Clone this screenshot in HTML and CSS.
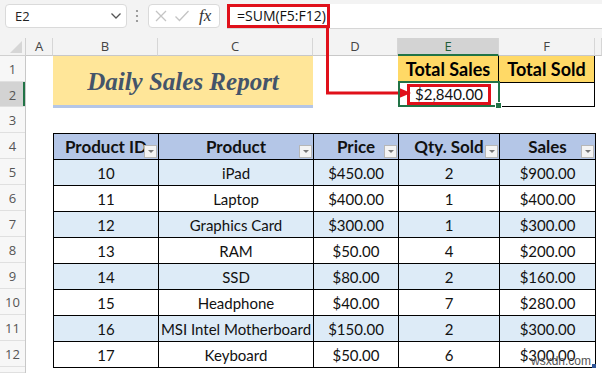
FILE: index.html
```html
<!DOCTYPE html>
<html lang="en">
<head>
    <meta charset="UTF-8">
    <title>Daily Sales Report</title>
    <link rel="stylesheet" href="styles.css">
</head>
<body>
<div class="page">
    <div class="formula-bar">
        <div class="name-box">
            <span>E2</span>
            <svg class="chevron" width="12" height="8" viewBox="0 0 12 8"><path d="M1.5 1.5 L6 6 L10.5 1.5" fill="none" stroke="#555" stroke-width="1.3"/></svg>
        </div>
        <svg class="dots" width="4" height="14" viewBox="0 0 4 14"><circle cx="2" cy="2" r="1.1" fill="#888"/><circle cx="2" cy="7" r="1.1" fill="#888"/><circle cx="2" cy="12" r="1.1" fill="#888"/></svg>
        <div class="fx-box">
            <svg width="14" height="14" viewBox="0 0 14 14"><path d="M2 2 L12 12 M12 2 L2 12" stroke="#c4c4c4" stroke-width="1.3"/></svg>
            <svg width="16" height="14" viewBox="0 0 16 14"><path d="M1.5 7.5 L5.5 11.5 L14.5 2" fill="none" stroke="#c4c4c4" stroke-width="1.3"/></svg>
            <span class="fx">fx</span>
        </div>
        <div class="formula-input">
            <span class="formula">=SUM(F5:F12)</span>
        </div>
    </div>

    <div class="sheet">
        <div class="corner"><svg width="12" height="12" viewBox="0 0 12 12"><path d="M12 0 L12 12 L0 12 Z" fill="#d6d6d6"/></svg></div>
        <div class="col-heads">
            <div class="col-head">A</div>
            <div class="col-head">B</div>
            <div class="col-head">C</div>
            <div class="col-head">D</div>
            <div class="col-head active">E</div>
            <div class="col-head">F</div>
            <div class="col-head"></div>
        </div>
        <div class="row-heads">
            <div class="row-head">1</div>
            <div class="row-head active">2</div>
            <div class="row-head">3</div>
            <div class="row-head">4</div>
            <div class="row-head">5</div>
            <div class="row-head">6</div>
            <div class="row-head">7</div>
            <div class="row-head">8</div>
            <div class="row-head">9</div>
            <div class="row-head">10</div>
            <div class="row-head">11</div>
            <div class="row-head">12</div>
            <div class="row-head"></div>
        </div>
        <div class="cells">
            <div class="title">Daily Sales Report</div>

            <div class="total-head col-e">Total Sales</div>
            <div class="total-head col-f">Total Sold</div>
            <div class="total-cell col-e selected"><span class="result">$2,840.00</span><span class="handle"></span></div>
            <div class="total-cell col-f"></div>

            <table class="sales">
                <colgroup>
                    <col style="width:105px"><col style="width:155px"><col style="width:85px"><col style="width:101px"><col style="width:96px">
                </colgroup>
                <thead>
                    <tr>
                        <th>Product ID<span class="filter"></span></th>
                        <th>Product<span class="filter"></span></th>
                        <th>Price<span class="filter"></span></th>
                        <th>Qty. Sold<span class="filter"></span></th>
                        <th>Sales<span class="filter"></span></th>
                    </tr>
                </thead>
                <tbody>
                    <tr><td>10</td><td>iPad</td><td>$450.00</td><td>2</td><td>$900.00</td></tr>
                    <tr><td>11</td><td>Laptop</td><td>$400.00</td><td>1</td><td>$400.00</td></tr>
                    <tr><td>12</td><td>Graphics Card</td><td>$300.00</td><td>1</td><td>$300.00</td></tr>
                    <tr><td>13</td><td>RAM</td><td>$50.00</td><td>4</td><td>$200.00</td></tr>
                    <tr><td>14</td><td>SSD</td><td>$80.00</td><td>2</td><td>$160.00</td></tr>
                    <tr><td>15</td><td>Headphone</td><td>$40.00</td><td>7</td><td>$280.00</td></tr>
                    <tr><td>16</td><td>MSI Intel Motherboard</td><td>$150.00</td><td>2</td><td>$300.00</td></tr>
                    <tr><td>17</td><td>Keyboard</td><td>$50.00</td><td>6</td><td>$300.00</td></tr>
                </tbody>
            </table>
        </div>
    </div>

    <!-- red pointer from the formula to the result cell -->
    <svg class="pointer" width="602" height="373" viewBox="0 0 602 373">
        <polyline points="327.5,28 327.5,93 400,93" fill="none" stroke="#e0101a" stroke-width="3"/>
        <polygon points="398,87.5 411,93 398,98.5" fill="#e0101a"/>
    </svg>
    <span class="table-grip"></span>
    <div class="watermark">wsxdn.com</div>
</div>
</body>
</html>
```

FILE: styles.css
```css
body {
    margin: 0;
    background-color: #ffffff;
    font-family: 'Lato', 'Liberation Sans', sans-serif;
}
.page {
    position: relative;
    width: 602px;
    height: 373px;
    overflow: hidden;
}

/* formula bar */
.formula-bar {
    height: 38px;
    box-sizing: border-box;
    padding: 4px 0 0 5px;
    display: flex;
    align-items: flex-start;
    background-color: #f3f3f3;
    font-family: 'Open Sans', 'Liberation Sans', sans-serif;
}
.name-box {
    width: 122px;
    height: 24px;
    box-sizing: border-box;
    border: 1px solid #dadada;
    border-radius: 4px;
    background-color: white;
    display: flex;
    align-items: center;
    justify-content: space-between;
    padding: 0 4px 0 9px;
    font-size: 13px;
    color: #222;
}
.dots {
    margin: 5px 9px 0 8px;
}
.fx-box {
    width: 72px;
    height: 24px;
    box-sizing: border-box;
    border: 1px solid #dadada;
    border-radius: 4px;
    background-color: white;
    display: flex;
    align-items: center;
    gap: 6px;
    padding-left: 5px;
}
.fx {
    font-family: 'Liberation Serif', serif;
    font-style: italic;
    font-size: 17px;
    color: #333;
    margin-left: 3px;
}
.formula-input {
    flex: 1;
    margin-left: 7px;
    height: 24px;
    background-color: white;
    border-bottom: 1px solid #d6d6d6;
}
.formula {
    display: inline-block;
    width: 103px;
    height: 24px;
    box-sizing: border-box;
    border: 3px solid #e0101a;
    font-size: 14px;
    line-height: 18px;
    padding-left: 7px;
    color: #111;
}

/* sheet frame */
.sheet {
    display: grid;
    grid-template-columns: 26px 1fr;
    grid-template-rows: 18px 1fr;
    height: 335px;
}
.corner {
    background-color: #f3f3f3;
    border-right: 1px solid #d0d0d0;
    border-bottom: 1px solid #d0d0d0;
    box-sizing: border-box;
    display: flex;
    align-items: flex-end;
    justify-content: flex-end;
    padding: 0 3px 2px 0;
}
.col-heads {
    display: grid;
    grid-template-columns: 27px 105px 155px 85px 101px 96px 1fr;
    background-color: #f3f3f3;
}
.col-head {
    border-right: 1px solid #d6d6d6;
    border-bottom: 1px solid #c8c8c8;
    text-align: center;
    font-family: 'Open Sans', 'Liberation Sans', sans-serif;
    font-size: 13px;
    line-height: 17px;
    color: #444;
}
.col-head.active {
    background-color: #d3d3d3;
    border-bottom: 2px solid #217346;
    color: #1d5c38;
    line-height: 16px;
}
.row-heads {
    display: grid;
    grid-template-rows: 26px 25px 26px repeat(9, 26px) 1fr;
    background-color: #f7f7f7;
    border-right: 1px solid #c8c8c8;
}
.row-head {
    border-bottom: 1px solid #e0e0e0;
    text-align: center;
    font-family: 'Open Sans', 'Liberation Sans', sans-serif;
    font-size: 13px;
    line-height: 26px;
    color: #555;
}
.row-head.active {
    background-color: #d3d3d3;
    box-shadow: inset -2px 0 0 #217346;
}

/* cells */
.cells {
    display: grid;
    grid-template-columns: 27px 105px 155px 85px 101px 96px 1fr;
    grid-template-rows: 26px 25px 26px repeat(9, 26px) 1fr;
}
.title {
    grid-column: 2 / 4;
    grid-row: 1 / 3;
    background-color: #ffe699;
    border-bottom: 3px solid #b4c6e7;
    margin-bottom: -1px;
    padding-top: 3px;
    display: flex;
    align-items: center;
    justify-content: center;
    font-family: 'Liberation Serif', serif;
    font-weight: bold;
    font-style: italic;
    font-size: 25px;
    color: #44546a;
}
.col-e {
    grid-column: 5;
}
.col-f {
    grid-column: 6;
}
.total-head {
    grid-row: 1;
    background-color: #ffd966;
    border-right: 1px solid #000;
    font-weight: bold;
    font-size: 18px;
    text-align: center;
    line-height: 27px;
    color: #000;
}
.total-cell {
    grid-row: 2;
    position: relative;
    border-top: 1px solid #000;
    border-right: 1px solid #000;
    border-bottom: 1px solid #000;
    display: flex;
    align-items: center;
    justify-content: center;
}
.total-cell.selected {
    border: 2px solid #217346;
    margin-top: -1px;
    margin-right: -1px;
    z-index: 1;
}
.result {
    border: 3px solid #e0101a;
    padding: 0 5px;
    font-size: 15px;
    line-height: 15px;
    height: 15px;
    color: #111;
}
.handle {
    position: absolute;
    right: -4px;
    bottom: -4px;
    width: 5px;
    height: 5px;
    background-color: #217346;
    border: 1px solid white;
}

/* data table */
.sales {
    grid-column: 2 / 7;
    grid-row: 4 / 13;
    border-collapse: collapse;
    table-layout: fixed;
    width: 542px;
    font-size: 15px;
    color: #111;
}
.sales th, .sales td {
    border: 1px solid #000;
    height: 25px;
    padding: 0;
    text-align: center;
    white-space: nowrap;
    overflow: hidden;
}
.sales th {
    position: relative;
    background-color: #b4c6e7;
    font-size: 17px;
    font-weight: bold;
    text-align: center;
}
.sales tbody tr:nth-child(odd) td {
    background-color: #ddebf7;
}
.filter {
    position: absolute;
    right: 1px;
    bottom: 1px;
    width: 13px;
    height: 13px;
    box-sizing: border-box;
    background-color: #f4f4f4;
    border: 1px solid #b7b7b7;
}
.filter::after {
    content: "";
    position: absolute;
    left: 3px;
    top: 4px;
    border-left: 3px solid transparent;
    border-right: 3px solid transparent;
    border-top: 3px solid #777;
}

/* overlays */
.pointer {
    position: absolute;
    left: 0;
    top: 0;
    pointer-events: none;
}
.table-grip {
    position: absolute;
    left: 592px;
    top: 364px;
    width: 4px;
    height: 4px;
    background-color: #2f5597;
}
.watermark {
    position: absolute;
    left: 531px;
    top: 354px;
    font-family: 'Liberation Sans', sans-serif;
    font-size: 12px;
    color: #555;
}
```
